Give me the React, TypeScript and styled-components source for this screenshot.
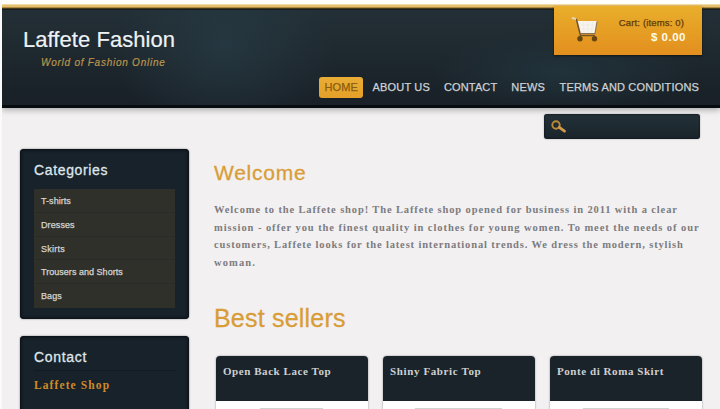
import React from "react";
import styled, { createGlobalStyle } from "styled-components";

const Global = createGlobalStyle`
  * { box-sizing: border-box; }
  body { margin: 0; background: #f2f0f1; font-family: "Liberation Sans", Arial, sans-serif; }
  h1, h2, h3, p, ul { margin: 0; padding: 0; font-weight: normal; }
  ul { list-style: none; }
`;

const Page = styled.div`
  width: 720px;
  height: 409px;
  overflow: hidden;
  border-left: 2px solid #fafafa;
  background: #f2f0f1;
`;

const TopStrip = styled.div`
  height: 10px;
  background: linear-gradient(#fffefa 0 4px, #f3dba4 4px 5px, #e6c170 5px 7px, #b28c40 7px 8px, #493d20 8px 9px, #18201f 9px);
`;

const Header = styled.header`
  position: relative;
  display: flex;
  justify-content: space-between;
  height: 98px;
  padding: 17px 21px 0 21px;
  border-bottom: 3px solid #070c11;
  box-shadow: 0 2px 6px rgba(0, 0, 0, 0.3);
  background:
    radial-gradient(ellipse 110px 100px at 222px 35px, rgba(40, 62, 72, 0.65), transparent),
    radial-gradient(ellipse 130px 40px at 560px 62px, rgba(34, 54, 63, 0.8), transparent),
    linear-gradient(#232f36, #192027);
`;

const Brand = styled.div`
  display: flex;
  flex-direction: column;
`;

const SiteName = styled.h1`
  font-size: 22px;
  line-height: 26px;
  letter-spacing: 0.06px;
  color: #eef2f5;
  -webkit-text-stroke: 0.2px #eef2f5;
`;

const Tagline = styled.p`
  margin-left: 18px;
  padding-top: 3px;
  font-size: 10px;
  line-height: 14px;
  font-style: italic;
  letter-spacing: 0.75px;
  color: #b8954e;
  -webkit-text-stroke: 0.2px #b8954e;
`;

const Nav = styled.nav`
  display: flex;
  align-items: center;
  align-self: flex-end;
  height: 22px;
  margin-bottom: 7px;
`;

const NavItem = styled.span<{ $active?: boolean; $gap: number }>`
  padding: ${(p) => (p.$active ? "0 5px" : "0")};
  margin-left: ${(p) => p.$gap}px;
  border-radius: 3px;
  line-height: 21px;
  font-size: 11px;
  letter-spacing: 0.16px;
  white-space: nowrap;
  color: ${(p) => (p.$active ? "#8a5d12" : "#cdd2d5")};
  -webkit-text-stroke: 0.25px ${(p) => (p.$active ? "#8a5d12" : "#cdd2d5")};
  background: ${(p) => (p.$active ? "linear-gradient(#e9ad35, #e5a029)" : "none")};
`;

const CartBox = styled.div`
  position: absolute;
  top: -4px;
  right: 18px;
  display: flex;
  justify-content: space-between;
  width: 148px;
  height: 49px;
  padding: 10px 16px 0 17px;
  background: linear-gradient(#e9ae2b, #e28f1e);
  box-shadow: 0 1px 2px rgba(0, 0, 0, 0.5);
`;

const CartText = styled.div`
  display: flex;
  flex-direction: column;
  align-items: flex-end;
`;

const CartLabel = styled.span`
  margin-right: 2px;
  font-size: 9.5px;
  line-height: 13px;
  letter-spacing: 0.15px;
  color: #5e3c08;
  -webkit-text-stroke: 0.25px #5e3c08;
`;

const CartTotal = styled.strong`
  font-size: 11.5px;
  line-height: 17px;
  letter-spacing: 0.5px;
  color: #fffbe9;
`;

const SearchRow = styled.div`
  display: flex;
  justify-content: flex-end;
  height: 41px;
  padding: 6px 20px 0 0;
`;

const SearchBox = styled.div`
  width: 156px;
  height: 25px;
  padding: 6px 0 0 7px;
  border-radius: 3px;
  background: linear-gradient(#243138, #19232a);
  box-shadow: inset 0 0 2px #080e12, 0 0 2px rgba(0, 0, 0, 0.3);
`;

const Columns = styled.div`
  display: flex;
  gap: 25px;
  padding-left: 18px;
`;

const Sidebar = styled.aside`
  display: flex;
  flex-direction: column;
  gap: 17px;
  width: 169px;
`;

const Panel = styled.section<{ $height: number }>`
  height: ${(p) => p.$height}px;
  padding: 12px 14px 0;
  border-radius: 4px;
  background: #18222a;
  box-shadow: inset 0 0 3px 1px #080e14, 0 0 2px rgba(0, 0, 0, 0.5);
`;

const PanelTitle = styled.h3<{ $spacing: number }>`
  font-size: 14px;
  line-height: 18px;
  letter-spacing: ${(p) => p.$spacing}px;
  color: #dfe6eb;
  -webkit-text-stroke: 0.3px #dfe6eb;
`;

const CategoryList = styled.ul`
  margin-top: 10px;
  background: #30302b;
`;

const Category = styled.li<{ $spacing: number }>`
  height: 23.8px;
  padding-left: 7px;
  border-bottom: 1px solid #292b28;
  font-size: 9px;
  line-height: 25px;
  letter-spacing: ${(p) => p.$spacing}px;
  color: #d5d5d0;
  -webkit-text-stroke: 0.25px #d5d5d0;
  &:last-child { border-bottom: 0; }
`;

const ShopName = styled.p`
  margin-top: 4px;
  padding-top: 6px;
  border-top: 1px solid #131b22;
  font: bold 11.5px/16px "Liberation Serif", serif;
  letter-spacing: 1.1px;
  color: #cf8b28;
`;

const Content = styled.main`
  padding-top: 11px;
`;

const Heading = styled.h2<{ $size: number; $spacing: number }>`
  font-size: ${(p) => p.$size}px;
  line-height: 26px;
  letter-spacing: ${(p) => p.$spacing}px;
  color: #d99d38;
  -webkit-text-stroke: 0.3px #d99d38;
`;

const Intro = styled.div`
  margin: 15px 0 34px;
`;

const IntroLine = styled.p<{ $spacing: number }>`
  font: bold 10.5px/17.5px "Liberation Serif", serif;
  letter-spacing: ${(p) => p.$spacing}px;
  white-space: nowrap;
  color: #7c7c7f;
`;

const Products = styled.div`
  display: flex;
  gap: 15.5px;
  margin: 25px 0 0 2px;
`;

const Product = styled.article`
  width: 151.5px;
  height: 70px;
  overflow: hidden;
  border-radius: 4px 4px 0 0;
  background: #fff;
  box-shadow: 0 0 2px rgba(0, 0, 0, 0.45);
`;

const ProductTitle = styled.h3<{ $spacing: number }>`
  height: 45px;
  padding: 7px 0 0 7px;
  background: #1a222a;
  font: bold 11px/17px "Liberation Serif", serif;
  letter-spacing: ${(p) => p.$spacing}px;
  color: #cdd0d2;
`;

const ProductImage = styled.div<{ $width: number }>`
  width: ${(p) => p.$width}px;
  height: 20px;
  margin: 7px auto 0;
  background: #d2d2d2;
`;

const nav = [
  { label: "HOME", gap: 0, active: true },
  { label: "ABOUT US", gap: 9.5 },
  { label: "CONTACT", gap: 14 },
  { label: "NEWS", gap: 14 },
  { label: "TERMS AND CONDITIONS", gap: 14.5 },
];

const categories = [
  { label: "T-shirts", spacing: 0.05 },
  { label: "Dresses", spacing: 0.1 },
  { label: "Skirts", spacing: 0.25 },
  { label: "Trousers and Shorts", spacing: 0.03 },
  { label: "Bags", spacing: 0.1 },
];

const intro = [
  { text: "Welcome to the Laffete shop! The Laffete shop opened for business in 2011 with a clear", spacing: 0.87 },
  { text: "mission - offer you the finest quality in clothes for young women. To meet the needs of our", spacing: 0.93 },
  { text: "customers, Laffete looks for the latest international trends. We dress the modern, stylish", spacing: 0.85 },
  { text: "woman.", spacing: 1.1 },
];

const products = [
  { name: "Open Back Lace Top", spacing: 0.56, image: 63 },
  { name: "Shiny Fabric Top", spacing: 0.62, image: 87 },
  { name: "Ponte di Roma Skirt", spacing: 0.56, image: 86 },
];

const CartIcon = () => (
  <svg width="30" height="28" viewBox="0 0 30 28" fill="none">
    <path d="M5.5 5h20.5l-2 12.5H9z" fill="#f7f4ee" />
    <path d="M9 9h15M9 13h14M12 6l1 11M17 6v11M22 6l-2 11" stroke="#eae5da" strokeWidth=".5" />
    <path d="M3 2.5l2.5 1 4 16h14.5" stroke="#75532a" strokeWidth="1.6" />
    <path d="M1 1.8l4 1.4" stroke="#e6d6ab" strokeWidth="2.2" />
    <path d="M26 5.5l-2 12H9" stroke="#8b7350" strokeWidth="1.1" />
    <circle cx="9" cy="22.8" r="2.7" fill="#67430f" />
    <circle cx="23.5" cy="22.8" r="2.7" fill="#67430f" />
  </svg>
);

const SearchIcon = () => (
  <svg width="17" height="14" viewBox="0 0 17 14" fill="none">
    <circle cx="5" cy="5" r="3.7" stroke="#bd8838" strokeWidth="1.9" />
    <path d="M8.3 7.3l5.2 3.8" stroke="#d29a48" strokeWidth="2.8" strokeLinecap="round" />
  </svg>
);

export default function App() {
  return (
    <Page>
      <Global />
      <TopStrip />
      <Header>
        <Brand>
          <SiteName>Laffete Fashion</SiteName>
          <Tagline>World of Fashion Online</Tagline>
        </Brand>
        <Nav>
          {nav.map((n) => (
            <NavItem key={n.label} $active={n.active} $gap={n.gap}>{n.label}</NavItem>
          ))}
        </Nav>
        <CartBox>
          <CartIcon />
          <CartText>
            <CartLabel>Cart: (items: 0)</CartLabel>
            <CartTotal>$ 0.00</CartTotal>
          </CartText>
        </CartBox>
      </Header>
      <SearchRow>
        <SearchBox><SearchIcon /></SearchBox>
      </SearchRow>
      <Columns>
        <Sidebar>
          <Panel $height={170}>
            <PanelTitle $spacing={0.65}>Categories</PanelTitle>
            <CategoryList>
              {categories.map((c) => (
                <Category key={c.label} $spacing={c.spacing}>{c.label}</Category>
              ))}
            </CategoryList>
          </Panel>
          <Panel $height={90}>
            <PanelTitle $spacing={0.7}>Contact</PanelTitle>
            <ShopName>Laffete Shop</ShopName>
          </Panel>
        </Sidebar>
        <Content>
          <Heading $size={21} $spacing={0.75}>Welcome</Heading>
          <Intro>
            {intro.map((l) => (
              <IntroLine key={l.text} $spacing={l.spacing}>{l.text}</IntroLine>
            ))}
          </Intro>
          <Heading $size={25} $spacing={0.2}>Best sellers</Heading>
          <Products>
            {products.map((p) => (
              <Product key={p.name}>
                <ProductTitle $spacing={p.spacing}>{p.name}</ProductTitle>
                <ProductImage $width={p.image} />
              </Product>
            ))}
          </Products>
        </Content>
      </Columns>
    </Page>
  );
}
